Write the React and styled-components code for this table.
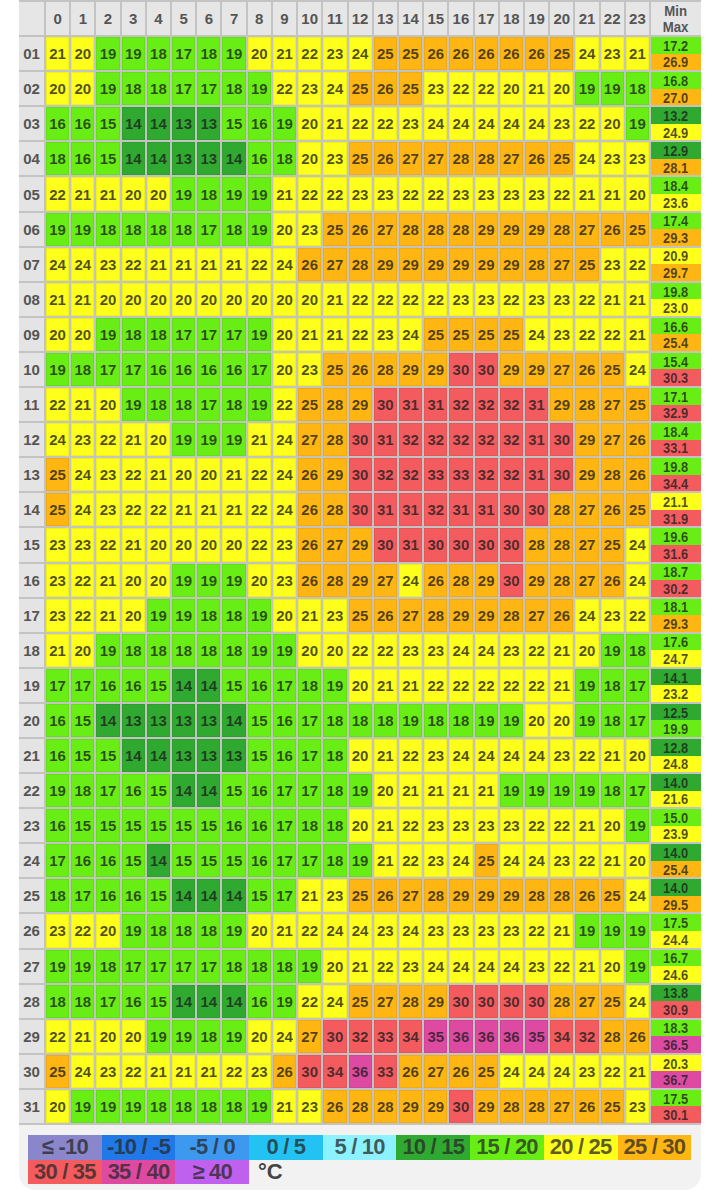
import React from 'react';
import styled, { createGlobalStyle } from 'styled-components';

const GlobalStyle = createGlobalStyle`
  body {
    margin: 0;
    background: #ffffff;
    font-family: "Liberation Sans", Arial, sans-serif;
  }
`;

// one row per day: 24 hourly values, then min / max
const days = [
  [[21, 20, 19, 19, 18, 17, 18, 19, 20, 21, 22, 23, 24, 25, 25, 26, 26, 26, 26, 26, 25, 24, 23, 21], '17.2', '26.9'],
  [[20, 20, 19, 18, 18, 17, 17, 18, 19, 22, 23, 24, 25, 26, 25, 23, 22, 22, 20, 21, 20, 19, 19, 18], '16.8', '27.0'],
  [[16, 16, 15, 14, 14, 13, 13, 15, 16, 19, 20, 21, 22, 22, 23, 24, 24, 24, 24, 24, 23, 22, 20, 19], '13.2', '24.9'],
  [[18, 16, 15, 14, 14, 13, 13, 14, 16, 18, 20, 23, 25, 26, 27, 27, 28, 28, 27, 26, 25, 24, 23, 23], '12.9', '28.1'],
  [[22, 21, 21, 20, 20, 19, 18, 19, 19, 21, 22, 22, 23, 23, 22, 22, 23, 23, 23, 23, 22, 21, 21, 20], '18.4', '23.6'],
  [[19, 19, 18, 18, 18, 18, 17, 18, 19, 20, 23, 25, 26, 27, 28, 28, 28, 29, 29, 29, 28, 27, 26, 25], '17.4', '29.3'],
  [[24, 24, 23, 22, 21, 21, 21, 21, 22, 24, 26, 27, 28, 29, 29, 29, 29, 29, 29, 28, 27, 25, 23, 22], '20.9', '29.7'],
  [[21, 21, 20, 20, 20, 20, 20, 20, 20, 20, 20, 21, 22, 22, 22, 22, 23, 23, 22, 23, 23, 22, 21, 21], '19.8', '23.0'],
  [[20, 20, 19, 18, 18, 17, 17, 17, 19, 20, 21, 21, 22, 23, 24, 25, 25, 25, 25, 24, 23, 22, 22, 21], '16.6', '25.4'],
  [[19, 18, 17, 17, 16, 16, 16, 16, 17, 20, 23, 25, 26, 28, 29, 29, 30, 30, 29, 29, 27, 26, 25, 24], '15.4', '30.3'],
  [[22, 21, 20, 19, 18, 18, 17, 18, 19, 22, 25, 28, 29, 30, 31, 31, 32, 32, 32, 31, 29, 28, 27, 25], '17.1', '32.9'],
  [[24, 23, 22, 21, 20, 19, 19, 19, 21, 24, 27, 28, 30, 31, 32, 32, 32, 32, 32, 31, 30, 29, 27, 26], '18.4', '33.1'],
  [[25, 24, 23, 22, 21, 20, 20, 21, 22, 24, 26, 29, 30, 32, 32, 33, 33, 32, 32, 31, 30, 29, 28, 26], '19.8', '34.4'],
  [[25, 24, 23, 22, 22, 21, 21, 21, 22, 24, 26, 28, 30, 31, 31, 32, 31, 31, 30, 30, 28, 27, 26, 25], '21.1', '31.9'],
  [[23, 23, 22, 21, 20, 20, 20, 20, 22, 23, 26, 27, 29, 30, 31, 30, 30, 30, 30, 28, 28, 27, 25, 24], '19.6', '31.6'],
  [[23, 22, 21, 20, 20, 19, 19, 19, 20, 23, 26, 28, 29, 27, 24, 26, 28, 29, 30, 29, 28, 27, 26, 24], '18.7', '30.2'],
  [[23, 22, 21, 20, 19, 19, 18, 18, 19, 20, 21, 23, 25, 26, 27, 28, 29, 29, 28, 27, 26, 24, 23, 22], '18.1', '29.3'],
  [[21, 20, 19, 18, 18, 18, 18, 18, 19, 19, 20, 20, 22, 22, 23, 23, 24, 24, 23, 22, 21, 20, 19, 18], '17.6', '24.7'],
  [[17, 17, 16, 16, 15, 14, 14, 15, 16, 17, 18, 19, 20, 21, 21, 22, 22, 22, 22, 22, 21, 19, 18, 17], '14.1', '23.2'],
  [[16, 15, 14, 13, 13, 13, 13, 14, 15, 16, 17, 18, 18, 18, 19, 18, 18, 19, 19, 20, 20, 19, 18, 17], '12.5', '19.9'],
  [[16, 15, 15, 14, 14, 13, 13, 13, 15, 16, 17, 18, 20, 21, 22, 23, 24, 24, 24, 24, 23, 22, 21, 20], '12.8', '24.8'],
  [[19, 18, 17, 16, 15, 14, 14, 15, 16, 17, 17, 18, 19, 20, 21, 21, 21, 21, 19, 19, 19, 19, 18, 17], '14.0', '21.6'],
  [[16, 15, 15, 15, 15, 15, 15, 16, 16, 17, 18, 18, 20, 21, 22, 23, 23, 23, 23, 22, 22, 21, 20, 19], '15.0', '23.9'],
  [[17, 16, 16, 15, 14, 15, 15, 15, 16, 17, 17, 18, 19, 21, 22, 23, 24, 25, 24, 24, 23, 22, 21, 20], '14.0', '25.4'],
  [[18, 17, 16, 16, 15, 14, 14, 14, 15, 17, 21, 23, 25, 26, 27, 28, 29, 29, 29, 28, 28, 26, 25, 24], '14.0', '29.5'],
  [[23, 22, 20, 19, 18, 18, 18, 19, 20, 21, 22, 24, 24, 23, 24, 23, 23, 23, 23, 22, 21, 19, 19, 19], '17.5', '24.4'],
  [[19, 19, 18, 17, 17, 17, 17, 18, 18, 18, 19, 20, 21, 22, 23, 24, 24, 24, 24, 23, 22, 21, 20, 19], '16.7', '24.6'],
  [[18, 18, 17, 16, 15, 14, 14, 14, 16, 19, 22, 24, 25, 27, 28, 29, 30, 30, 30, 30, 28, 27, 25, 24], '13.8', '30.9'],
  [[22, 21, 20, 20, 19, 19, 18, 19, 20, 24, 27, 30, 32, 33, 34, 35, 36, 36, 36, 35, 34, 32, 28, 26], '18.3', '36.5'],
  [[25, 24, 23, 22, 21, 21, 21, 22, 23, 26, 30, 34, 36, 33, 26, 27, 26, 25, 24, 24, 24, 23, 22, 21], '20.3', '36.7'],
  [[20, 19, 19, 19, 18, 18, 18, 18, 19, 21, 23, 26, 28, 28, 29, 29, 30, 29, 28, 28, 27, 26, 25, 23], '17.5', '30.1'],
];

const scale = [
  { label: '≤ -10', color: '#8a86cc' },
  { label: '-10 / -5', color: '#2079e6' },
  { label: '-5 / 0', color: '#3d98f0' },
  { label: '0 / 5', color: '#22c3f2' },
  { label: '5 / 10', color: '#8cf2ff' },
  { label: '10 / 15', color: '#30a930' },
  { label: '15 / 20', color: '#68ee14' },
  { label: '20 / 25', color: '#ffff1c' },
  { label: '25 / 30', color: '#ffb612' },
  { label: '30 / 35', color: '#f45b5f' },
  { label: '35 / 40', color: '#de4aa2' },
  { label: '≥ 40', color: '#c060ee' },
];

function tempColor(v) {
  const t = parseFloat(v);
  if (t >= 40) return scale[11].color;
  if (t >= 35) return scale[10].color;
  if (t >= 30) return scale[9].color;
  if (t >= 25) return scale[8].color;
  if (t >= 20) return scale[7].color;
  if (t >= 15) return scale[6].color;
  if (t >= 10) return scale[5].color;
  if (t >= 5) return scale[4].color;
  if (t >= 0) return scale[3].color;
  if (t >= -5) return scale[2].color;
  if (t >= -10) return scale[1].color;
  return scale[0].color;
}

const hours = Array.from({ length: 24 }, (_, i) => i);

export default function App() {
  return (
    <Page>
      <GlobalStyle />
      <Grid>
        <HeadCell />
        {hours.map((h) => (
          <HeadCell key={h}>{h}</HeadCell>
        ))}
        <HeadCell>
          <MinMaxTitle>
            <span>Min</span>
            <span>Max</span>
          </MinMaxTitle>
        </HeadCell>

        {days.map(([temps, min, max], d) => (
          <React.Fragment key={d}>
            <DayCell>{String(d + 1).padStart(2, '0')}</DayCell>
            {temps.map((t, h) => (
              <TempCell key={h} $bg={tempColor(t)}>
                {t}
              </TempCell>
            ))}
            <RangeCell>
              <RangeHalf $bg={tempColor(min)}>
                <Narrow>{min}</Narrow>
              </RangeHalf>
              <RangeHalf $bg={tempColor(max)}>
                <Narrow>{max}</Narrow>
              </RangeHalf>
            </RangeCell>
          </React.Fragment>
        ))}
      </Grid>

      <Legend>
        {scale.map((s) => (
          <LegendItem key={s.label} $bg={s.color}>
            {s.label}
          </LegendItem>
        ))}
        <LegendUnit>°C</LegendUnit>
      </Legend>
    </Page>
  );
}

const Page = styled.div`
  width: 682px;
  padding-left: 19px;
`;

const Grid = styled.div`
  display: grid;
  grid-template-columns: 25px repeat(24, 1fr) 50px;
  grid-auto-rows: 33.1px;
  gap: 2px;
  padding: 2px 0;
  background: #c3c3c3;
`;

const HeadCell = styled.div`
  display: flex;
  align-items: center;
  justify-content: center;
  background: #e6e6e6;
  color: #555555;
  font-size: 15px;
  font-weight: bold;
`;

const MinMaxTitle = styled.div`
  display: flex;
  flex-direction: column;
  align-items: center;
  font-size: 15px;
  line-height: 16px;
  transform: scaleX(0.88);
`;

const DayCell = styled(HeadCell)`
  background: #e4e4e4;
`;

const TempCell = styled.div`
  display: flex;
  align-items: center;
  justify-content: center;
  background: ${(p) => p.$bg};
  box-shadow: inset 0 0 0 1px rgba(0, 0, 0, 0.06);
  color: rgba(30, 30, 30, 0.78);
  font-size: 15px;
  font-weight: bold;
`;

const RangeCell = styled.div`
  display: flex;
  flex-direction: column;
`;

const RangeHalf = styled.div`
  flex: 1;
  display: flex;
  align-items: center;
  justify-content: center;
  background: ${(p) => p.$bg};
  color: rgba(30, 30, 30, 0.78);
  font-size: 15px;
  font-weight: bold;
  line-height: 1;
`;

const Narrow = styled.span`
  display: inline-block;
  transform: scaleX(0.86);
`;

const Legend = styled.div`
  display: grid;
  grid-template-columns: repeat(9, 73.7px);
  grid-auto-rows: 24.6px;
  padding: 10px 9px 6px;
  background: #f2f2f2;
  border-radius: 0 0 16px 16px;
`;

const LegendItem = styled.div`
  display: flex;
  align-items: center;
  justify-content: center;
  background: ${(p) => p.$bg};
  color: rgba(40, 40, 40, 0.75);
  font-size: 22px;
  font-weight: bold;
  letter-spacing: -0.8px;
  white-space: nowrap;
`;

const LegendUnit = styled.div`
  display: flex;
  align-items: center;
  padding-left: 9px;
  color: #444444;
  font-size: 22px;
  font-weight: bold;
`;
